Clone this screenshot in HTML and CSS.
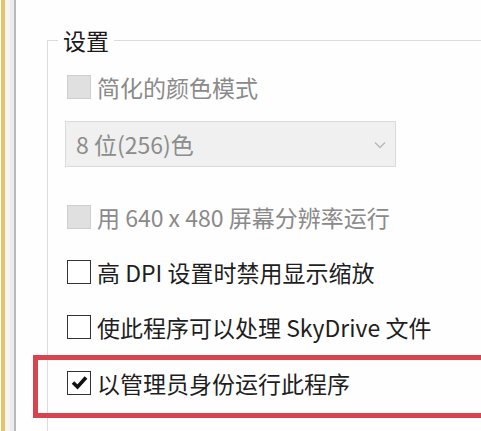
FILE: index.html
```html
<!DOCTYPE html>
<html lang="zh-CN">
<head>
<meta charset="utf-8">
<link rel="stylesheet" href="styles.css">
</head>
<body>
<div class="window">
  <div class="frame">
    <div class="frame-gold"></div>
    <div class="frame-pad"></div>
    <div class="frame-line"></div>
  </div>
  <div class="content">
    <fieldset class="settings">
      <legend class="settings-title">设置</legend>
      <div class="settings-body">
        <div class="row disabled">
          <span class="box"></span>
          <span class="label">简化的颜色模式</span>
        </div>
        <div class="select">
          <span class="select-text">8 位(256)色</span>
          <svg class="chevron" width="12" height="8" viewBox="0 0 12 8"><path d="M1 1.5 L6 6.5 L11 1.5" fill="none" stroke="#b8b8b8" stroke-width="1.4"/></svg>
        </div>
        <div class="row disabled row-gap">
          <span class="box"></span>
          <span class="label">用 640 x 480 屏幕分辨率运行</span>
        </div>
        <div class="row">
          <span class="box"></span>
          <span class="label">高 DPI 设置时禁用显示缩放</span>
        </div>
        <div class="row">
          <span class="box"></span>
          <span class="label">使此程序可以处理 SkyDrive 文件</span>
        </div>
        <div class="row row-last">
          <span class="box checked"><svg width="17" height="15" viewBox="0 0 17 15"><path d="M2 7.5 L6.5 12 L15 2.5" fill="none" stroke="#111111" stroke-width="3.6" stroke-linejoin="miter"/></svg></span>
          <span class="label">以管理员身份运行此程序</span>
        </div>
      </div>
    </fieldset>
  </div>
</div>
<div class="highlight"></div>
</body>
</html>
```
FILE: styles.css
```css
html, body {
  margin: 0;
  padding: 0;
  background: #ffffff;
}
body {
  width: 481px;
  height: 431px;
  overflow: hidden;
  position: relative;
  font-family: "Noto Sans CJK SC", "Noto Sans", sans-serif;
  color: #1e1e1e;
}
.window {
  display: flex;
  height: 431px;
}
.frame {
  display: flex;
  flex: none;
}
.frame-gold {
  width: 4px;
  margin-left: 1px;
  background: #e6c46c;
}
.frame-pad {
  width: 9px;
  background: linear-gradient(90deg, #f7f5f2 0 5px, #ececec 5px);
}
.frame-line {
  width: 2px;
  background: #b9b9b9;
}
.content {
  flex: 1;
  background: #fefefe;
  padding-left: 31px;
  padding-top: 25px;
  min-width: 0;
  overflow: hidden;
}
.settings {
  margin: 0;
  padding: 0;
  border: 1px solid #dcdcdc;
  border-right: none;
  height: 440px;
  box-sizing: border-box;
  min-width: 0;
}
.settings-title {
  margin-left: 10px;
  padding: 0 5px;
  font-size: 23px;
  line-height: 30px;
  color: #1a1a1a;
}
.settings-body {
  padding: 4px 0 0 19px;
}
.row {
  display: flex;
  align-items: center;
  height: 55px;
  font-size: 23px;
}
.row-gap {
  margin-top: 22px;
}
.row-last {
  margin-top: 1px;
}
.box {
  flex: none;
  width: 22px;
  height: 22px;
  border: 1px solid #333333;
  background: #ffffff;
  margin-right: 6px;
  display: flex;
  align-items: center;
  justify-content: center;
}
.disabled .box {
  background: #e0e0e0;
  border-color: #cfcfcf;
}
.disabled .label {
  color: #8a8a8a;
}
.label {
  white-space: nowrap;
  line-height: 30px;
}
.select {
  display: flex;
  align-items: center;
  justify-content: space-between;
  box-sizing: border-box;
  width: 331px;
  height: 46px;
  margin-left: -2px;
  margin-top: 7px;
  padding: 0 9px 0 10px;
  background: #f0f0f0;
  border: 1px solid #dadada;
  font-size: 23px;
  color: #8c8c8c;
}
.chevron {
  margin-top: 2px;
}
.highlight {
  position: absolute;
  left: 33px;
  right: 0;
  top: 355px;
  height: 63px;
  box-sizing: border-box;
  border: 5px solid #d9434d;
  border-right: none;
}
```
